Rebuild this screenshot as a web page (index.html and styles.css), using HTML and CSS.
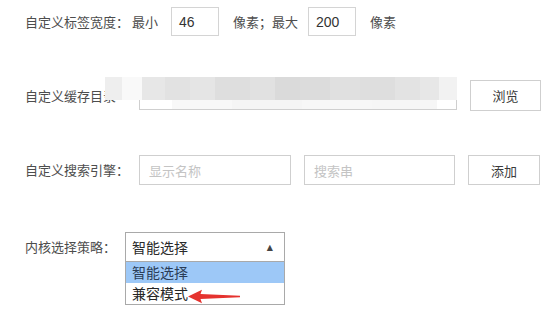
FILE: index.html
```html
<!DOCTYPE html>
<html lang="zh">
<head>
<meta charset="utf-8">
<link rel="stylesheet" href="styles.css">
</head>
<body>
<div class="page">
  <div class="row row-width">
    <span class="label">自定义标签宽度：&nbsp;最小</span>
    <div class="num">46</div>
    <span class="label mid">像素；最大</span>
    <div class="num second">200</div>
    <span class="label unit">像素</span>
  </div>

  <div class="row row-cache">
    <span class="label fixed">自定义缓存目录</span>
    <div class="field path"></div>
    <button class="btn">浏览</button>
    <div class="mosaic">
      <div class="mrow top">
        <i style="width:17px;background:#eeeeee"></i>
        <i style="width:20px;background:#f9f9f9"></i>
        <i style="width:23px;background:#e7e7e7"></i>
        <i style="width:25px;background:#e2e2e2"></i>
        <i style="width:25px;background:#e5e5e5"></i>
        <i style="width:35px;background:#dedede"></i>
        <i style="width:25px;background:#e1e1e1"></i>
        <i style="width:25px;background:#dadada"></i>
        <i style="width:30px;background:#dcdcdc"></i>
        <i style="width:30px;background:#e0e0e0"></i>
        <i style="width:35px;background:#dedede"></i>
        <i style="width:25px;background:#e3e3e3"></i>
        <i style="width:19px;background:#e7e7e7"></i>
        <i style="width:18px;background:#f2f2f2"></i>
      </div>
      <div class="mrow bottom">
        <i style="width:67px;background:transparent"></i>
        <i style="width:60px;background:#f8f8f8"></i>
        <i style="width:70px;background:#f5f5f5"></i>
        <i style="width:70px;background:#f7f7f7"></i>
        <i style="width:65px;background:#f6f6f6"></i>
      </div>
    </div>
  </div>

  <div class="row row-search">
    <span class="label fixed">自定义搜索引擎：</span>
    <div class="field name"><span class="ph">显示名称</span></div>
    <div class="field query"><span class="ph">搜索串</span></div>
    <button class="btn">添加</button>
  </div>

  <div class="row row-core">
    <span class="label core">内核选择策略：</span>
    <div class="select">
      <span class="sel-text">智能选择</span>
      <span class="caret">▲</span>
      <ul class="options">
        <li class="opt active">智能选择</li>
        <li class="opt">兼容模式</li>
      </ul>
      <svg class="red-arrow" width="54" height="15" viewBox="0 0 54 15">
        <path d="M1 7.5 L15 0.8 L13.5 5 L53 6.8 L53 8.2 L13.5 10 L15 14.2 Z" fill="#e5332f"/>
      </svg>
    </div>
  </div>
</div>
</body>
</html>
```

FILE: styles.css
```css
html, body {
  margin: 0;
  padding: 0;
  background: #ffffff;
}

.page {
  position: relative;
  width: 557px;
  height: 309px;
  overflow: hidden;
  padding-left: 25px;
  box-sizing: border-box;
  font-family: "Noto Sans CJK SC", "Noto Sans", sans-serif;
  font-size: 13px;
  color: #4d4d4d;
}

.row {
  display: flex;
  align-items: center;
  position: relative;
}

.label {
  white-space: nowrap;
  line-height: 16px;
}

.row-width {
  margin-top: 7px;
  height: 29px;
}

.num {
  box-sizing: border-box;
  width: 48px;
  height: 29px;
  border: 1px solid #d4d4d4;
  padding-left: 7px;
  display: flex;
  align-items: center;
  font-family: "Liberation Sans", Arial, sans-serif;
  font-size: 14px;
  color: #333;
  margin-left: 13px;
}

.num.second {
  margin-left: 10px;
}

.mid {
  margin-left: 14px;
}

.unit {
  margin-left: 14px;
}

.row-cache {
  margin-top: 44px;
  height: 31px;
}

.fixed {
  width: 114px;
}

.field {
  box-sizing: border-box;
  height: 30px;
  border: 1px solid #cfcfcf;
  background: #fff;
  display: flex;
  align-items: center;
  padding-left: 9px;
}

.path {
  width: 318px;
  height: 29px;
}

.btn {
  box-sizing: border-box;
  height: 31px;
  width: 71px;
  margin-left: 13px;
  border: 1px solid #cfcfcf;
  background: #fff;
  font-family: "Noto Sans CJK SC", sans-serif;
  font-size: 13px;
  color: #3a3a3a;
  padding: 0;
}

.mosaic {
  position: absolute;
  left: 80px;
  top: -3px;
  width: 352px;
}

.mrow {
  display: flex;
}

.mrow i {
  display: block;
}

.mrow.top i {
  height: 23px;
}

.mrow.bottom i {
  height: 9px;
}

.row-search {
  margin-top: 44px;
  height: 30px;
}

.name {
  width: 152px;
}

.query {
  width: 151px;
  margin-left: 13px;
}

.row-search .btn {
  height: 30px;
  width: 72px;
}

.ph {
  color: #c4c4c4;
  font-size: 13px;
}

.row-core {
  margin-top: 47px;
  height: 30px;
}

.core {
  width: 100px;
}

.select {
  position: relative;
  box-sizing: border-box;
  width: 160px;
  height: 30px;
  border: 1px solid #a9a9a9;
  display: flex;
  align-items: center;
  padding-left: 6px;
  padding-right: 11px;
  justify-content: space-between;
  color: #2a2a2a;
  font-size: 14px;
}

.caret {
  font-size: 8px;
  color: #444;
  font-family: "DejaVu Sans", sans-serif;
}

.options {
  position: absolute;
  left: -1px;
  top: 29px;
  width: 160px;
  margin: 0;
  padding: 0;
  list-style: none;
  box-sizing: border-box;
  border: 1px solid #a9a9a9;
  border-top: none;
  background: #fff;
}

.opt {
  height: 21px;
  line-height: 21px;
  padding-left: 6px;
  font-size: 14px;
  color: #262626;
}

.opt.active {
  background: #9dc8f7;
  color: #2b3d57;
}

.red-arrow {
  position: absolute;
  left: 61px;
  top: 56px;
}
```
